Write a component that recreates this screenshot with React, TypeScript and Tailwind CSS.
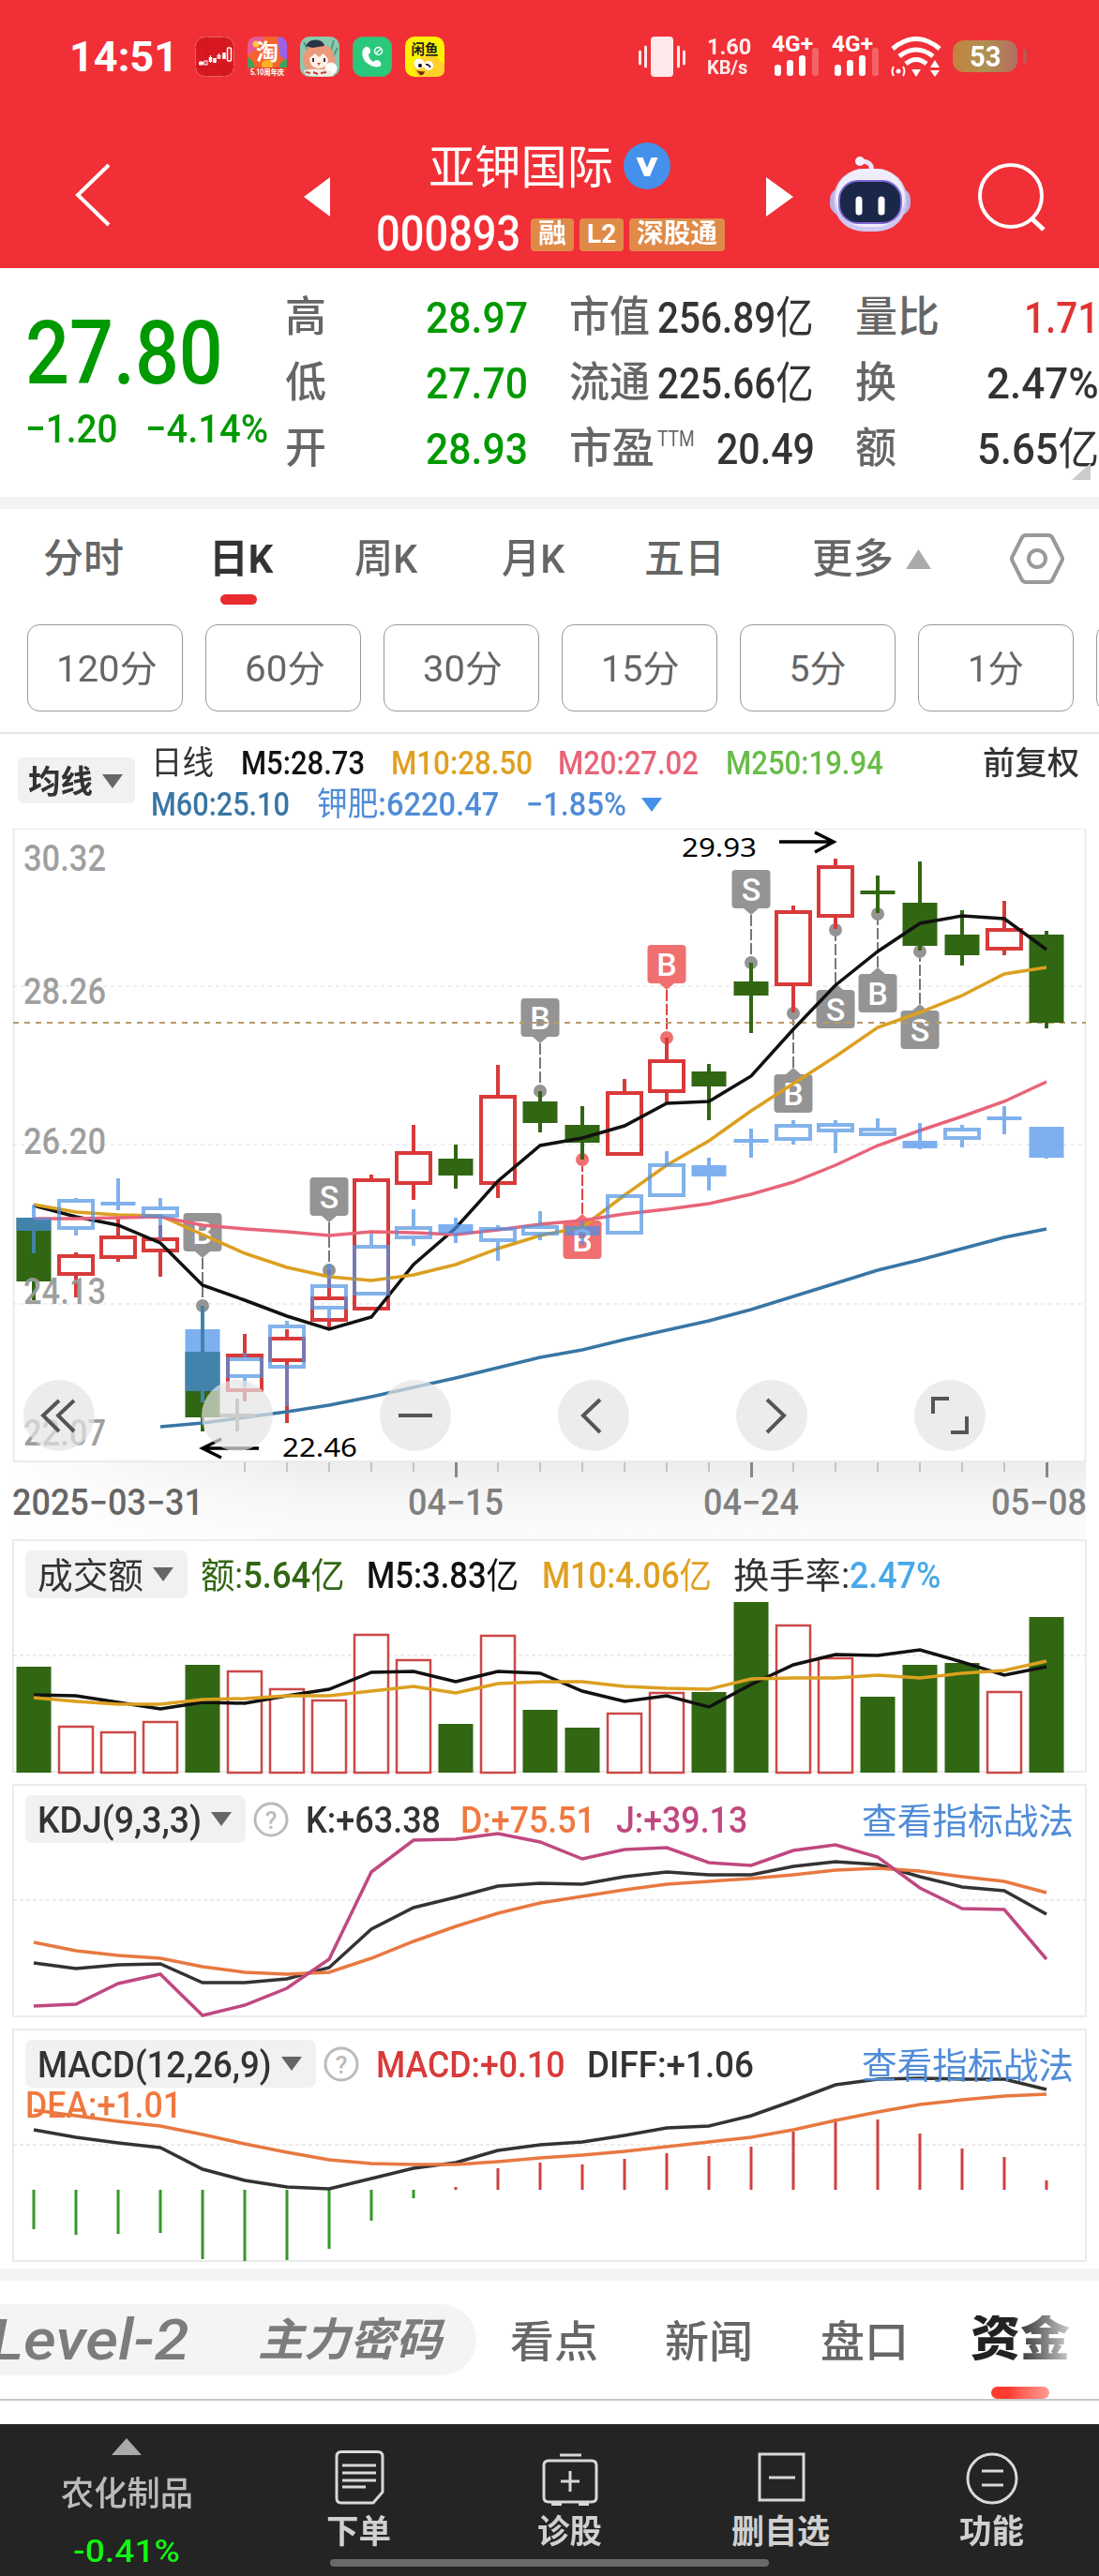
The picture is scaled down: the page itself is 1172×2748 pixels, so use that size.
import { useLayoutEffect, useRef, useState } from 'react';
import type { ReactNode } from 'react';

const FONT = 'font-[Roboto,"Noto_Sans_CJK_SC",sans-serif]';

// Squeezes a single line of text into a fixed width, like the DIN digits of the app.
function Fit({ w, className = '', children }: { w: number; className?: string; children: ReactNode }) {
  const ref = useRef<HTMLSpanElement>(null);
  const [scale, setScale] = useState(1);

  useLayoutEffect(() => {
    if (ref.current) setScale(w / ref.current.offsetWidth);
  }, [w]);

  return (
    <div className={`shrink-0 whitespace-nowrap leading-none ${className}`} style={{ width: w }}>
      <span ref={ref} className="inline-block origin-left" style={{ transform: `scaleX(${scale})` }}>
        {children}
      </span>
    </div>
  );
}

function Triangle({ className, dir = 'down' }: { className: string; dir?: 'up' | 'down' | 'left' | 'right' }) {
  const points = {
    up: '0,10 5,0 10,10',
    down: '0,0 10,0 5,10',
    left: '10,0 10,10 0,5',
    right: '0,0 10,5 0,10',
  }[dir];
  return (
    <svg viewBox="0 0 10 10" preserveAspectRatio="none" className={`shrink-0 fill-current ${className}`}>
      <polygon points={points} />
    </svg>
  );
}

/* ---------- data ---------- */

const X = (i: number) => 36 + 45 * i;
const line = (ys: number[], from = 0) => ys.map((y, i) => `${X(i + from)},${y}`).join(' ');

// kind, high, body top, body bottom, low (chart pixels)
type Candle = ['r' | 'g', number, number, number, number];

const CANDLES: Candle[] = [
  ['g', 1299, 1299, 1367, 1387], ['r', 1336, 1338, 1361, 1384], ['r', 1298, 1318, 1343, 1346],
  ['r', 1307, 1320, 1336, 1362], ['g', 1393, 1442, 1512, 1527], ['r', 1423, 1444, 1485, 1495],
  ['r', 1418, 1426, 1453, 1518], ['r', 1355, 1383, 1410, 1419], ['r', 1253, 1257, 1398, 1398],
  ['r', 1200, 1228, 1264, 1280], ['g', 1221, 1236, 1254, 1268], ['r', 1136, 1168, 1264, 1278],
  ['g', 1164, 1175, 1198, 1208], ['g', 1180, 1200, 1219, 1237], ['r', 1151, 1164, 1233, 1233],
  ['r', 1107, 1130, 1166, 1176], ['g', 1135, 1143, 1159, 1195], ['g', 1027, 1047, 1062, 1102],
  ['r', 966, 971, 1052, 1080], ['r', 916, 923, 979, 991], ['g', 934, 950, 954, 974],
  ['g', 919, 963, 1009, 1014], ['g', 971, 997, 1019, 1030], ['r', 961, 990, 1014, 1019],
  ['g', 993, 997, 1091, 1097],
];

// Overlay index, 'g' bodies are filled.
const OVERLAY: Candle[] = [
  ['g', 1285, 1299, 1313, 1337], ['r', 1278, 1279, 1312, 1318], ['g', 1257, 1282, 1286, 1291],
  ['r', 1278, 1287, 1299, 1322], ['g', 1393, 1418, 1484, 1496], ['r', 1443, 1448, 1470, 1480],
  ['r', 1409, 1413, 1460, 1500], ['r', 1348, 1370, 1397, 1407], ['r', 1316, 1328, 1382, 1382],
  ['r', 1290, 1308, 1322, 1329], ['g', 1299, 1306, 1316, 1326], ['r', 1307, 1309, 1325, 1345],
  ['r', 1292, 1307, 1318, 1323], ['g', 1303, 1308, 1318, 1328], ['r', 1274, 1274, 1317, 1317],
  ['r', 1228, 1241, 1277, 1277], ['g', 1235, 1243, 1255, 1270], ['g', 1204, 1215, 1219, 1235],
  ['r', 1195, 1199, 1217, 1221], ['r', 1195, 1198, 1208, 1230], ['r', 1193, 1203, 1212, 1212],
  ['g', 1198, 1217, 1225, 1226], ['r', 1200, 1203, 1216, 1224], ['g', 1180, 1191, 1195, 1210],
  ['g', 1202, 1202, 1235, 1236],
];

const MA5 = [1286, 1298, 1307, 1326, 1371, 1387, 1404, 1418, 1405, 1349, 1310, 1260, 1222, 1214, 1201, 1177, 1175, 1148, 1098, 1051, 1015, 985, 977, 980, 1013];
const MA10 = [1285, 1293, 1296, 1297, 1317, 1337, 1352, 1362, 1366, 1360, 1349, 1332, 1318, 1309, 1275, 1243, 1217, 1185, 1156, 1127, 1096, 1080, 1062, 1039, 1032];
const MA20 = [1300, 1300, 1299, 1298, 1307, 1311, 1314, 1318, 1314, 1315, 1317, 1312, 1306, 1302, 1295, 1290, 1284, 1274, 1261, 1243, 1222, 1206, 1191, 1175, 1154];
const MA60 = [1522, 1518, 1512, 1506, 1499, 1490, 1480, 1470, 1459, 1448, 1440, 1429, 1419, 1409, 1397, 1383, 1369, 1355, 1344, 1332, 1320, 1311];

// index, letter, flag top, dot y, red
const FLAGS: [number, string, number, number, boolean][] = [
  [4, 'B', 1294, 1393, false], [7, 'S', 1256, 1355, false], [12, 'B', 1065, 1164, false],
  [13, 'B', 1302, 1237, true], [15, 'B', 1008, 1107, true], [17, 'S', 928, 1027, false],
  [18, 'B', 1146, 1081, false], [19, 'S', 1056, 992, false], [20, 'B', 1039, 975, false],
  [21, 'S', 1078, 1015, false],
];

const AXIS: [string, number][] = [['30.32', 929], ['28.26', 1071], ['26.20', 1231], ['24.13', 1391], ['22.07', 1542]];

const VOLUME = [1778, 1841, 1847, 1836, 1776, 1782, 1801, 1813, 1743, 1770, 1839, 1744, 1824, 1843, 1827, 1805, 1805, 1709, 1733, 1768, 1810, 1776, 1774, 1804, 1725];
const VOL5 = [1808, 1809, 1816, 1823, 1816, 1817, 1809, 1802, 1784, 1783, 1794, 1783, 1785, 1804, 1815, 1809, 1821, 1797, 1776, 1765, 1766, 1760, 1773, 1787, 1778];
const VOL10 = [1811, 1815, 1818, 1818, 1813, 1812, 1809, 1809, 1804, 1799, 1806, 1796, 1794, 1794, 1799, 1801, 1802, 1791, 1790, 1790, 1787, 1790, 1785, 1782, 1772];

const K = [2094, 2100, 2096, 2095, 2115, 2115, 2111, 2099, 2058, 2035, 2024, 2012, 2009, 2010, 2002, 1997, 2000, 2000, 1991, 1986, 1989, 2002, 2013, 2017, 2042];
const D = [2072, 2081, 2086, 2089, 2098, 2104, 2106, 2104, 2089, 2071, 2055, 2041, 2030, 2023, 2016, 2010, 2007, 2004, 2000, 1995, 1993, 1996, 2002, 2007, 2019];
const J = [2140, 2138, 2116, 2106, 2150, 2139, 2121, 2090, 1997, 1963, 1962, 1956, 1965, 1983, 1973, 1971, 1987, 1990, 1974, 1968, 1981, 2014, 2036, 2037, 2090];

const DIFF = [2272, 2280, 2286, 2291, 2314, 2326, 2333, 2335, 2324, 2313, 2307, 2294, 2288, 2285, 2278, 2270, 2268, 2257, 2241, 2224, 2218, 2217, 2218, 2218, 2229];
const DEA = [2251, 2257, 2263, 2268, 2277, 2287, 2296, 2304, 2308, 2309, 2309, 2306, 2302, 2299, 2295, 2290, 2285, 2280, 2272, 2262, 2253, 2245, 2240, 2236, 2234];
const MACD = [2378, 2384, 2383, 2382, 2410, 2412, 2411, 2399, 2369, 2345, 2333, 2313, 2307, 2309, 2303, 2297, 2300, 2290, 2274, 2260, 2261, 2276, 2292, 2301, 2326];

/* ---------- header ---------- */

function Signal() {
  return (
    <svg viewBox="0 -6 50 50" className="mt-[-6px] h-[50px] w-[50px] shrink-0">
      <text x="0" y="17" textLength="44" lengthAdjust="spacingAndGlyphs" fontSize="23" fontWeight="700" fill="#fff">4G+</text>
      <rect x="3" y="31" width="7" height="12" rx="3" fill="#fff" />
      <rect x="16" y="26" width="7" height="17" rx="3" fill="#fff" />
      <rect x="29" y="21" width="7" height="22" rx="3" fill="#fff" />
      <rect x="43" y="13" width="7" height="30" rx="3" fill="#fff" opacity="0.25" />
    </svg>
  );
}

function AppIcons() {
  const icon = 'h-[43px] w-[42px]';
  return (
    <div className="ml-[18px] flex gap-[14px]">
      <svg viewBox="0 0 42 43" className={icon}>
        <rect x="0.5" y="0.5" width="41" height="42" rx="10" fill="#d81820" stroke="#ea6468" />
        <path d="M0 12h42M0 32h42M12 0v43M31 0v43" stroke="#c8141c" />
        <path d="M4 28.500h5M16.500 22v5M21 23v5M31 17v7" stroke="#fff" strokeWidth="3.500" />
        <path d="M6.500 26v5M16.500 20v8M25.500 18v6" stroke="#fff" strokeWidth="1" />
        <rect x="10" y="26" width="3" height="4" fill="none" stroke="#fff" />
        <rect x="24" y="20" width="3" height="3" fill="none" stroke="#fff" />
        <rect x="34.500" y="12" width="4" height="14" rx="1" fill="none" stroke="#fff" strokeWidth="1.5" />
      </svg>
      <svg viewBox="0 0 42 43" className={icon}>
        <rect width="42" height="43" rx="10" fill="#f4642c" />
        <path d="M0 10Q0 0 10 0h8L6 16 0 20z" fill="#e8589a" />
        <path d="M32 0q10 0 10 10v16l-8-6z" fill="#9a62e8" />
        <path d="M0 22q6 2 8 12H0zM42 24q-8 2-9 10h9z" fill="#42a15e" />
        <circle cx="9" cy="8" r="3.500" fill="#ffc63a" />
        <text x="21" y="25" textAnchor="middle" fontSize="24" fontWeight="700" fill="#fff">淘</text>
        <ellipse cx="21" cy="30" rx="6" ry="5" fill="#ffb324" />
        <path d="M0 33h42q0 10-10 10H10Q0 43 0 33z" fill="#e5402c" />
        <text x="21" y="41" textAnchor="middle" textLength="36" lengthAdjust="spacingAndGlyphs" fontSize="8.500" fontWeight="700" fill="#fff">5.10周年庆</text>
      </svg>
      <svg viewBox="0 0 42 43" className={icon}>
        <rect width="42" height="43" rx="10" fill="#8cc8ac" />
        <path d="M4 6l6 12M36 4l-4 14M40 12l-6 12" stroke="#4e9c80" strokeWidth="2" />
        <path d="M3 28Q3 8 20 8q16 1 17 16l1 8-8 5H8z" fill="#eb9a7a" />
        <path d="M6 10Q10 2 20 4q5 1 6 6l-13 2z" fill="#2c3548" />
        <path d="M10 23l6-5 4 4 5-4 5 6q0 9-10 10-10-1-10-11z" fill="#fff0e6" />
        <path d="M14 23v4M26 23v4" stroke="#463435" strokeWidth="2" />
        <path d="M18 28h4l-2 3z" fill="#d84a4a" />
        <circle cx="33" cy="34" r="6.500" fill="#fff" />
        <path d="M4 36q14-3 30 1l2 5q-16 2-30-1z" fill="#f6ece6" />
        <path d="M6 38l5 1M14 38l5 2M22 39l6-1" stroke="#b8403a" strokeWidth="2" />
      </svg>
      <svg viewBox="0 0 42 43" className={icon}>
        <rect x="0.5" y="0.5" width="41" height="42" rx="10" fill="#2ac87b" stroke="#58a878" />
        <path d="M14 11c-6 3-4 13 1 17s11 6 15 3c2-3-2-6-5-6l-3 2c-3-2-5-5-5-8l2-2c1-3-2-7-5-6z" fill="#fff" />
        <circle cx="27.500" cy="15.500" r="4" fill="none" stroke="#fff" strokeWidth="1.5" />
        <path d="M25 18l5-5" stroke="#fff" strokeWidth="1.5" />
      </svg>
      <svg viewBox="0 0 42 43" className={icon}>
        <rect width="42" height="43" rx="10" fill="#fff200" />
        <text x="21" y="19" textAnchor="middle" textLength="29" lengthAdjust="spacingAndGlyphs" fontSize="15" fontWeight="700" fill="#222">闲鱼</text>
        <path d="M9 33Q9 22 21 22q10-4 17 4l4 4v6q0 7-9 7H13z" fill="#ffd12a" />
        <circle cx="15" cy="29" r="5.500" fill="#fff" />
        <circle cx="25" cy="31" r="5" fill="#fff" />
        <circle cx="16" cy="31" r="2" />
        <path d="M22 30q3-1 5 3" fill="none" stroke="#000" strokeWidth="1.5" />
        <path d="M12 36q5 2 9 1-1 5-5 4z" fill="#7a2710" />
      </svg>
    </div>
  );
}

function StatusBar() {
  return (
    <div className="flex h-[120px] items-center pl-[74px] text-white">
      <Fit w={116} className="text-[45px] font-bold">14:51</Fit>
      <AppIcons />
      <svg viewBox="0 0 50 43" className="ml-[207px] h-[43px] w-[50px]">
        <rect x="13" y="0" width="24" height="43" rx="4" fill="#ffe9ea" />
        <path d="M1.500 16v13M7.500 11v21M42.500 11v21M48.500 16v13" stroke="#ffe9ea" strokeWidth="3" strokeLinecap="round" />
      </svg>
      <div className="ml-[23px] flex flex-col font-bold text-[#ffecec]">
        <Fit w={47} className="text-[24px]">1.60</Fit>
        <Fit w={43} className="text-[21px]">KB/s</Fit>
      </div>
      <div className="ml-[22px] flex gap-[14px]">
        <Signal />
        <Signal />
      </div>
      <svg viewBox="0 0 54 43" className="ml-[13px] h-[43px] w-[54px]" fill="none" stroke="#fff" strokeWidth="5">
        <path d="M2 13Q27-8 52 13M9 21Q27 7 45 21M16 29Q27 20 38 29" />
        <path d="M22 35h10l-5 8zM42 33l5-8 5 8zM42 36h10l-5 7z" fill="#fff" stroke="none" />
        <circle cx="8" cy="37" r="2.500" fill="#fff" stroke="none" />
        <path d="M3 32q-3 5 0 10M13 32q3 5 0 10" strokeWidth="2" />
      </svg>
      <div className="ml-[12px] flex h-[34px] w-[69px] items-center justify-center rounded-[12px] bg-gradient-to-r from-[#c4823f] via-[#ad9152] to-[#b66b5f]">
        <Fit w={34} className="text-[31px] font-bold">53</Fit>
      </div>
      <div className="ml-[6px] h-[16px] w-[4px] rounded-r bg-[#b85a50]" />
    </div>
  );
}

function Tag({ w, children }: { w: number; children: ReactNode }) {
  return (
    <span className="flex h-[35px] items-center justify-center rounded-[4px] bg-[#e08a48] px-[8px] text-[28px] font-bold">
      <Fit w={w}>{children}</Fit>
    </span>
  );
}

function NavBar() {
  return (
    <div className="flex h-[166px] items-start text-white">
      <svg viewBox="0 0 38 68" className="mt-[54px] ml-[80px] h-[68px] w-[38px]" fill="none" stroke="#fff" strokeWidth="4">
        <path d="M36 2L3 34l33 32" />
      </svg>
      <Triangle dir="left" className="mt-[69px] ml-[206px] h-[42px] w-[28px]" />
      <div className="ml-[49px] w-[372px] pt-[29px]">
        <div className="flex items-center pl-[56px]">
          <Fit w={197} className="mt-[6px] text-[49px]">亚钾国际</Fit>
          <svg viewBox="0 0 50 50" className="ml-[11px] h-[50px] w-[50px]">
            <circle cx="25" cy="25" r="25" fill="#4490ea" />
            <path d="M13.500 16h7L25 27l4.500-11h7L28 36h-6z" fill="#fff" />
          </svg>
        </div>
        <div className="mt-[20px] flex items-center gap-[6px]">
          <Fit w={154} className="mr-[5px] text-[52px] font-medium">000893</Fit>
          <Tag w={30}>融</Tag>
          <Tag w={31}>L2</Tag>
          <Tag w={86}>深股通</Tag>
        </div>
      </div>
      <Triangle dir="right" className="mt-[69px] ml-[44px] h-[42px] w-[29px]" />
      <svg viewBox="0 0 88 82" className="mt-[46px] ml-[38px] h-[82px] w-[88px]">
        <path d="M45 16q2-8-8-10" fill="none" stroke="#e9e4fa" strokeWidth="5" />
        <circle cx="33" cy="6" r="5" fill="#f3effd" />
        <rect x="1" y="34" width="86" height="30" rx="13" fill="#b9afe4" />
        <rect x="5" y="14" width="78" height="67" rx="32" fill="#cfc8f0" />
        <rect x="7" y="14" width="74" height="62" rx="31" fill="#f0edfb" />
        <rect x="11" y="27" width="66" height="45" rx="20" fill="#1b2748" stroke="#7e68d4" strokeWidth="2" />
        <path d="M32 47v13M56 47v13" stroke="#fff" strokeWidth="7" strokeLinecap="round" />
      </svg>
      <svg viewBox="0 0 74 74" className="mt-[53px] ml-[70px] h-[74px] w-[74px]" fill="none" stroke="#fff" strokeWidth="4">
        <circle cx="36" cy="36" r="33" />
        <path d="M58 60l13 12" strokeWidth="5" />
      </svg>
    </div>
  );
}

/* ---------- quote ---------- */

function Quote() {
  const label = 'text-[45px] font-medium text-[#666]';
  const value = 'text-[47px] font-medium';
  const row = 'flex h-[70px] items-center';
  return (
    <section className="flex h-[244px] pt-[17px]">
      <div className="w-[304px] shrink-0 pl-[27px] text-[#009900]">
        <Fit w={211} className="mt-[27px] text-[94px] font-medium">27.80</Fit>
        <div className="mt-[12px] flex gap-[30px] text-[43px] font-medium">
          <Fit w={98}>−1.20</Fit>
          <Fit w={131}>−4.14%</Fit>
        </div>
      </div>
      <div className="w-[303px] shrink-0">
        {[['高', '28.97'], ['低', '27.70'], ['开', '28.93']].map(([name, v]) => (
          <div key={name} className={row}>
            <Fit w={44} className={label}>{name}</Fit>
            <Fit w={109} className={`${value} ml-[106px] text-[#009900]`}>{v}</Fit>
          </div>
        ))}
      </div>
      <div className="w-[305px] shrink-0 text-[#333]">
        <div className={row}>
          <Fit w={86} className={label}>市值</Fit>
          <Fit w={167} className={`${value} ml-[8px]`}>256.89<span className="font-normal">亿</span></Fit>
        </div>
        <div className={row}>
          <Fit w={86} className={label}>流通</Fit>
          <Fit w={167} className={`${value} ml-[8px]`}>225.66<span className="font-normal">亿</span></Fit>
        </div>
        <div className={row}>
          <Fit w={91} className={label}>市盈</Fit>
          <Fit w={40} className="mb-[20px] ml-[3px] text-[23px] text-[#666]">TTM</Fit>
          <Fit w={105} className={`${value} ml-[23px]`}>20.49</Fit>
        </div>
      </div>
      <div className="relative w-[260px] shrink-0 text-[#333]">
        <div className={`${row} justify-between`}>
          <Fit w={90} className={label}>量比</Fit>
          <Fit w={80} className={`${value} text-[#e03333]`}>1.71</Fit>
        </div>
        <div className={`${row} justify-between`}>
          <Fit w={44} className={label}>换</Fit>
          <Fit w={120} className={value}>2.47%</Fit>
        </div>
        <div className={`${row} justify-between`}>
          <Fit w={44} className={label}>额</Fit>
          <Fit w={130} className={value}>5.65<span className="font-normal">亿</span></Fit>
        </div>
        <svg viewBox="0 0 20 18" className="absolute right-[9px] bottom-[18px] h-[18px] w-[20px] fill-[#ccc]">
          <polygon points="20,0 20,18 0,18" />
        </svg>
      </div>
    </section>
  );
}

/* ---------- period tabs ---------- */

function PeriodTabs() {
  return (
    <section className="h-[238px] overflow-hidden">
      <div className="flex h-[106px] items-center pl-[46px] text-[43px] font-medium text-[#666]">
        <Fit w={86}>分时</Fit>
        <div className="relative ml-[91px] font-bold text-[#333]">
          <Fit w={68}>日K</Fit>
          <div className="absolute top-[59px] left-[12px] h-[11px] w-[39px] rounded-full bg-[#e82c30]" />
        </div>
        <Fit w={67} className="ml-[87px]">周K</Fit>
        <Fit w={67} className="ml-[90px]">月K</Fit>
        <Fit w={86} className="ml-[85px]">五日</Fit>
        <Fit w={87} className="ml-[93px]">更多</Fit>
        <Triangle dir="up" className="ml-[13px] h-[21px] w-[27px] text-[#aaa]" />
        <svg viewBox="0 0 58 54" className="ml-[84px] h-[54px] w-[58px]" fill="none" stroke="#999" strokeWidth="4">
          <path d="M17 2h24q3 0 4.500 3L55 24q2 3 0 6L45.500 49q-1.500 3-4.500 3H17q-3 0-4.500-3L3 30q-2-3 0-6L12.500 5Q14 2 17 2z" />
          <circle cx="29" cy="27" r="9" />
        </svg>
      </div>
      <div className="mt-[17px] flex gap-[24px] pl-[29px]">
        {([['120分', 108], ['60分', 86], ['30分', 85], ['15分', 84], ['5分', 61], ['1分', 60], ['', 0]] as [string, number][]).map(([name, w], i) => (
          <button
            key={i}
            type="button"
            className="flex h-[93px] w-[166px] shrink-0 items-center justify-center rounded-[13px] border border-[#999] pt-[4px] text-[39px] text-[#666]"
          >
            {name && <Fit w={w}>{name}</Fit>}
          </button>
        ))}
      </div>
    </section>
  );
}

/* ---------- k line ---------- */

function KLegend() {
  return (
    <div className="flex h-[101px] text-[35px]">
      <div className="mt-[25px] ml-[19px] flex h-[49px] w-[125px] shrink-0 items-center rounded-[6px] bg-[#f1f1f1] pt-[2px] pl-[11px] font-bold text-[#333]">
        <Fit w={69} className="text-[34px]">均线</Fit>
        <Triangle className="ml-[10px] h-[15px] w-[22px] text-[#666]" />
      </div>
      <div className="ml-[17px] pt-[9px]">
        <div className="flex h-[44px] items-center font-medium">
          <Fit w={67} className="font-normal text-[#333]">日线</Fit>
          <Fit w={132} className="ml-[29px] text-[#111]">M5:28.73</Fit>
          <Fit w={151} className="ml-[28px] text-[#e0a020]">M10:28.50</Fit>
          <Fit w={150} className="ml-[27px] text-[#e86478]">M20:27.02</Fit>
          <Fit w={168} className="ml-[29px] text-[#68bc48]">M250:19.94</Fit>
          <Fit w={103} className="ml-[106px] text-[34px] text-[#333]">前复权</Fit>
        </div>
        <div className="flex h-[44px] items-center font-medium">
          <Fit w={148} className="text-[#3876a4]">M60:25.10</Fit>
          <Fit w={194} className="ml-[29px] text-[#508cd8]"><span className="font-normal">钾肥</span>:6220.47</Fit>
          <Fit w={107} className="ml-[29px] text-[#508cd8]">−1.85%</Fit>
          <Triangle className="ml-[16px] h-[15px] w-[22px] text-[#4490ea]" />
        </div>
      </div>
    </div>
  );
}

function CandleMark({ i, c, red, green }: { i: number; c: Candle; red: string; green: string }) {
  const [kind, high, top, bottom, low] = c;
  const x = X(i);
  const color = kind === 'r' ? red : green;
  return (
    <g>
      {high < top && <rect x={x - 2} y={high} width="4" height={top - high} fill={color} />}
      {low > bottom && <rect x={x - 2} y={bottom} width="4" height={low - bottom} fill={color} />}
      {kind === 'r' ? (
        <rect x={x - 18} y={top + 2} width="36" height={bottom - top - 4} fill="none" stroke={color} strokeWidth="4" />
      ) : (
        <rect x={x - 18.5} y={top} width="37" height={bottom - top} fill={color} />
      )}
    </g>
  );
}

function Flag({ flag }: { flag: [number, string, number, number, boolean] }) {
  const [i, letter, top, dot, red] = flag;
  const x = X(i);
  const above = top < dot;
  const edge = above ? top + 41 : top;
  const tip = above ? edge + 7 : edge - 7;
  const fill = red ? '#f07070' : '#949494';
  return (
    <g>
      <line x1={x} x2={x} y1={tip} y2={dot} stroke={red ? '#e04444' : '#777'} strokeWidth="2" strokeDasharray="12 3" />
      <circle cx={x} cy={dot} r="7" fill={fill} />
      <rect x={x - 20.5} y={top} width="41" height="41" rx="4" fill={fill} />
      <polygon points={`${x - 8},${edge} ${x + 8},${edge} ${x},${tip}`} fill={fill} />
      <text x={x} y={top + 33} textAnchor="middle" fontSize="34" fontWeight="500" fill="#fff">{letter}</text>
    </g>
  );
}

const CONTROLS = [
  { key: 'first', d: 'M38 22L21 38l17 17M54 22L37 38l17 17', color: 'stroke-[#555]' },
  { key: 'in', d: 'M38 20v35M20 38h36', color: 'stroke-[#ccc]' },
  { key: 'out', d: 'M20 38h36', color: 'stroke-[#555]' },
  { key: 'prev', d: 'M45 21L27 38l18 18', color: 'stroke-[#555]' },
  { key: 'next', d: 'M33 21l18 17-18 18', color: 'stroke-[#555]' },
  { key: 'full', d: 'M20 36V20h17M56 39v17H39', color: 'stroke-[#555]' },
];

function KChart() {
  return (
    <div className="relative h-[759px]">
      <div className="absolute inset-x-[14px] top-[676px] h-[83px] bg-gradient-to-b from-[#ededed] via-[#f7f7f7] to-[#fcfcfc]" />
      <div className="absolute top-[676px] left-0 h-[83px] w-[330px] bg-gradient-to-r from-white to-transparent" />
      <svg viewBox="0 884 1172 759" className="absolute inset-0 h-[759px] w-[1172px]">
        <rect x="14.500" y="884" width="1143" height="675" fill="#fff" stroke="#ebebeb" strokeWidth="2" />
        <g stroke="#ddd" strokeWidth="1" strokeDasharray="4 4">
          <path d="M14 1052h1144M14 1221h1144M14 1391h1144" />
        </g>
        {FLAGS.map((f) => <Flag key={f[0]} flag={f} />)}
        <path d="M14 1091h1144" stroke="#b99a68" strokeWidth="2" strokeDasharray="6 6" />
        {CANDLES.map((c, i) => <CandleMark key={i} i={i} c={c} red="#d83a3a" green="#316613" />)}
        <g fill="none" strokeWidth="3.500">
          <polyline points={line(MA5)} stroke="#111" />
          <polyline points={line(MA10)} stroke="#dca020" />
          <polyline points={line(MA20)} stroke="#e86478" />
          <polyline points={line(MA60, 3)} stroke="#3876a4" />
        </g>
        <g opacity="0.7">
          {OVERLAY.map((c, i) => <CandleMark key={i} i={i} c={c} red="#5094e2" green="#4890eb" />)}
        </g>
        <g fontSize="38" fontWeight="500" fill="#999" fillOpacity="0.95">
          {AXIS.map(([t, y]) => (
            <text key={t} x="25" y={y} textLength="88" lengthAdjust="spacingAndGlyphs">{t}</text>
          ))}
        </g>
        <g fontSize="28" className='font-["Noto_Sans"]'>
          <text x="727" y="914" textLength="80" lengthAdjust="spacingAndGlyphs">29.93</text>
          <text x="301" y="1554" textLength="80" lengthAdjust="spacingAndGlyphs">22.46</text>
        </g>
        <path d="M831 898h58M869 888l20 10-20 11M276 1545h-59M236 1535l-20 10 20 10" fill="none" stroke="#000" strokeWidth="3.500" />
        {Array.from({ length: 20 }, (_, n) => n + 5).map((i) => {
          const major = i === 10 || i === 17 || i === 24;
          return (
            <rect key={i} x={X(i) - 1} y="1560" width={major ? 3 : 2} height={major ? 16 : 10} fill={major ? '#888' : '#c4c4c4'} />
          );
        })}
        <g fontSize="38" fontWeight="500" fill="#808080">
          <text x="13" y="1616" textLength="204" lengthAdjust="spacingAndGlyphs" fill="#666">2025−03−31</text>
          <text x="435" y="1616" textLength="102" lengthAdjust="spacingAndGlyphs">04−15</text>
          <text x="750" y="1616" textLength="102" lengthAdjust="spacingAndGlyphs">04−24</text>
          <text x="1057" y="1616" textLength="102" lengthAdjust="spacingAndGlyphs">05−08</text>
        </g>
      </svg>
      <div className="absolute top-[588px] left-[25px] flex gap-[114px]">
        {CONTROLS.map((c) => (
          <button key={c.key} type="button" className="h-[76px] w-[76px] rounded-full bg-[#e4e4e4]/70">
            <svg viewBox="0 0 76 76" className={`fill-none stroke-[4] ${c.color}`}>
              <path d={c.d} />
            </svg>
          </button>
        ))}
      </div>
    </div>
  );
}

/* ---------- indicators ---------- */

function Panel({ top, chart, children }: { top: number; chart: ReactNode; children: ReactNode }) {
  return (
    <div className="relative mx-[13px] h-[249px] w-[1146px] border-2 border-[#ebebeb] bg-white text-[38px]">
      <svg viewBox={`15 ${top + 1} 1142 245`} className="absolute inset-0 h-[245px] w-[1142px] overflow-visible">
        <path d={`M14 ${top + 123}h1144`} stroke="#d8d8d8" strokeWidth="1" strokeDasharray="4 3" />
        {chart}
      </svg>
      <div className="relative">{children}</div>
    </div>
  );
}

function Chip({ w, children }: { w: number; children: ReactNode }) {
  return (
    <div className="flex h-[51px] shrink-0 items-center rounded-[7px] bg-[#f1f1f1] pr-[15px] pl-[13px] text-[#333]">
      <Fit w={w} className="mt-[2px]">{children}</Fit>
      <Triangle className="ml-[10px] h-[15px] w-[22px] text-[#666]" />
    </div>
  );
}

function Help() {
  return (
    <svg viewBox="0 0 38 38" className="ml-[8px] h-[38px] w-[38px] shrink-0">
      <circle cx="19" cy="19" r="17" fill="none" stroke="#bbb" strokeWidth="3" />
      <text x="19" y="28.500" textAnchor="middle" fontSize="26" fill="#bbb">?</text>
    </svg>
  );
}

function Indicators() {
  return (
    <section>
      <Panel
        top={1643}
        chart={
          <>
            {VOLUME.map((y, i) =>
              CANDLES[i][0] === 'g' ? (
                <rect key={i} x={X(i) - 18.5} y={y} width="37" height={1891 - y} fill="#316613" />
              ) : (
                <rect key={i} x={X(i) - 18} y={y + 1} width="36" height={1890 - y} fill="#fff" stroke="#cc4848" strokeWidth="2.500" />
              ),
            )}
            <g fill="none" strokeWidth="3.500">
              <polyline points={line(VOL5)} stroke="#111" />
              <polyline points={line(VOL10)} stroke="#dca020" />
            </g>
          </>
        }
      >
        <div className="flex items-center pt-[10px] pl-[12px]">
          <Chip w={113}>成交额</Chip>
          <Fit w={154} className="mt-[2px] ml-[14px] text-[#316613]">额:<span className="font-medium">5.64</span>亿</Fit>
          <Fit w={162} className="mt-[2px] ml-[23px] text-[#111]"><span className="font-medium">M5:3.83</span>亿</Fit>
          <Fit w={181} className="mt-[2px] ml-[25px] text-[#e0a020]"><span className="font-medium">M10:4.06</span>亿</Fit>
          <Fit w={124} className="mt-[2px] ml-[23px] text-[#333]">换手率:</Fit>
          <Fit w={97} className="mt-[2px] font-medium text-[#48a8e8]">2.47%</Fit>
        </div>
      </Panel>
      <div className="h-[12px]" />
      <Panel
        top={1904}
        chart={
          <g fill="none" strokeWidth="3.500">
            <polyline points={line(K)} stroke="#333" />
            <polyline points={line(D)} stroke="#e87840" />
            <polyline points={line(J)} stroke="#c04880" />
          </g>
        }
      >
        <div className="flex items-center pt-[10px] pl-[12px] font-medium">
          <Chip w={175}>KDJ(9,3,3)</Chip>
          <Help />
          <Fit w={144} className="mt-[2px] ml-[18px] text-[#333]">K:+63.38</Fit>
          <Fit w={144} className="mt-[2px] ml-[21px] text-[#f07840]">D:+75.51</Fit>
          <Fit w={140} className="mt-[2px] ml-[22px] text-[#c04880]">J:+39.13</Fit>
          <Fit w={226} className="mt-[4px] mr-[12px] ml-auto font-normal text-[#508cd8]">查看指标战法</Fit>
        </div>
      </Panel>
      <div className="h-[12px]" />
      <Panel
        top={2165}
        chart={
          <>
            {MACD.map((y, i) => (
              <rect
                key={i}
                x={X(i) - 1.5}
                y={Math.min(y, 2336)}
                width="3"
                height={Math.abs(y - 2336)}
                fill={i < 10 ? '#339926' : '#d04040'}
              />
            ))}
            <g fill="none" strokeWidth="3.500">
              <polyline points={line(DIFF)} stroke="#333" />
              <polyline points={line(DEA)} stroke="#e87840" />
            </g>
          </>
        }
      >
        <div className="flex items-center pt-[10px] pl-[12px] font-medium">
          <Chip w={250}>MACD(12,26,9)</Chip>
          <Help />
          <Fit w={202} className="mt-[2px] ml-[18px] text-[#d83a3a]">MACD:+0.10</Fit>
          <Fit w={178} className="mt-[2px] ml-[23px] text-[#333]">DIFF:+1.06</Fit>
          <Fit w={226} className="mt-[4px] mr-[12px] ml-auto font-normal text-[#508cd8]">查看指标战法</Fit>
        </div>
        <Fit w={167} className="ml-[12px] font-medium text-[#f07840]">DEA:+1.01</Fit>
      </Panel>
    </section>
  );
}

/* ---------- bottom ---------- */

function InfoTabs() {
  return (
    <section className="flex h-[128px] items-center border-b-2 border-[#c8c8c8] text-[46px] font-medium text-[#666]">
      <div className="mt-[-1px] flex h-[76px] w-[508px] shrink-0 items-center rounded-r-full bg-[#f4f4f4] text-[#7c7c7c] italic">
        <Fit w={212} className="mt-[3px] ml-[-10px] text-[60px]">Level-2</Fit>
        <Fit w={196} className="mt-[3px] ml-[73px] text-[48px] font-bold">主力密码</Fit>
      </div>
      <Fit w={94} className="mt-[4px] ml-[36px]">看点</Fit>
      <Fit w={94} className="mt-[4px] ml-[71px]">新闻</Fit>
      <Fit w={94} className="mt-[4px] ml-[72px]">盘口</Fit>
      <div className="relative ml-[66px]">
        <Fit w={106} className="text-[52px] font-black">
          <span className="inline-block bg-gradient-to-r from-[#222] from-40% to-[#ccc] bg-clip-text text-transparent">资金</span>
        </Fit>
        <div className="absolute top-[76px] left-[22px] h-[13px] w-[62px] rounded-full bg-gradient-to-r from-[#ff3b30] from-30% to-[#ff9a94]" />
      </div>
    </section>
  );
}

function Action({ w, label, children }: { w: number; label: string; children: ReactNode }) {
  return (
    <button type="button" className="flex w-[225px] shrink-0 flex-col items-center pt-[27px]">
      <svg viewBox="0 0 62 60" className="h-[60px] w-[62px]" fill="none" stroke="#d8d8d8" strokeWidth="3">
        {children}
      </svg>
      <Fit w={w} className="mt-[11px] text-[35px] font-bold text-[#d0d0d0]">{label}</Fit>
    </button>
  );
}

function BottomBar() {
  return (
    <footer className="relative flex h-[162px] bg-[#242424]">
      <div className="flex w-[270px] shrink-0 flex-col items-center pt-[15px]">
        <Triangle dir="up" className="h-[18px] w-[32px] text-[#aaa]" />
        <Fit w={141} className="mt-[24px] text-[36px] font-medium text-[#bbb]">农化制品</Fit>
        <Fit w={114} className="mt-[25px] text-[34px] font-medium text-[#12f512]">-0.41%</Fit>
      </div>
      <Action w={69} label="下单">
        <path d="M12 2.500h39q5 0 5 5v38L46 57H12q-5 0-5-5V7.500q0-5 5-5zM13 17h36M13 25h36M13 33h36M13 40h25" />
      </Action>
      <Action w={69} label="诊股">
        <path d="M8 12h46q5 0 5 5v34q0 5-5 5H8q-5 0-5-5V17q0-5 5-5zM20 6h23M31 23v22M21 34h20" />
        <path d="M11 58h11M40 58h11" strokeWidth="4" />
      </Action>
      <Action w={105} label="删自选">
        <path d="M8 5h47v49H8zM18 30h28" />
      </Action>
      <Action w={69} label="功能">
        <circle cx="31" cy="31" r="26" />
        <path d="M20 23h23M20 38h23" />
      </Action>
      <div className="absolute bottom-[10px] left-[352px] h-[8px] w-[468px] rounded-full bg-[#696969]" />
    </footer>
  );
}

export default function App() {
  return (
    <div className={`h-[2748px] w-[1172px] overflow-hidden bg-white ${FONT}`}>
      <header className="h-[286px] bg-[#f12f36]">
        <StatusBar />
        <NavBar />
      </header>
      <Quote />
      <div className="h-[13px] bg-[#f3f3f3]" />
      <PeriodTabs />
      <div className="h-[2px] bg-[#e5e5e5]" />
      <KLegend />
      <KChart />
      <div className="mt-[-1px]">
        <Indicators />
      </div>
      <div className="mt-[7px] h-[13px] bg-[#f4f4f4]" />
      <InfoTabs />
      <div className="h-[25px]" />
      <BottomBar />
    </div>
  );
}
